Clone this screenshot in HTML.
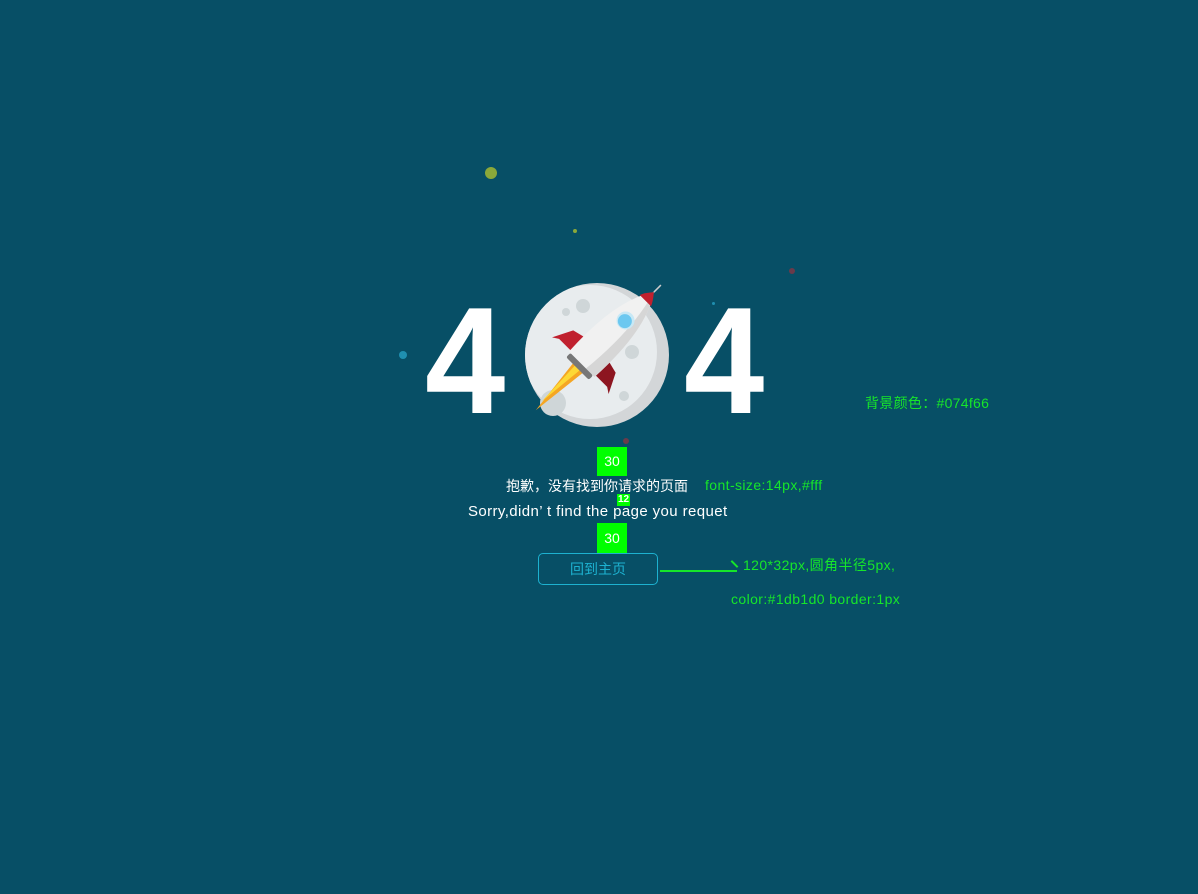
<!DOCTYPE html>
<html><head><meta charset="utf-8"><style>
body{margin:0;width:1198px;height:894px;background:#074f66;position:relative;overflow:hidden;font-family:"Liberation Sans","Noto Sans CJK SC",sans-serif}
.a{position:absolute;white-space:nowrap}
.four{position:absolute;color:#fff;font-weight:bold;font-size:152px;line-height:1;top:285px;transform:scaleX(.95);transform-origin:left top}
.g{position:absolute;background:#00ff00;color:#fff;font-size:14px;text-align:center}
.ann{position:absolute;color:#16e62a;font-size:14px;white-space:nowrap;letter-spacing:.4px}
.dot{position:absolute;border-radius:50%}
</style></head><body>
<div class="dot" style="left:485px;top:167px;width:12px;height:12px;background:#8aa83a"></div>
<div class="dot" style="left:573px;top:229px;width:4px;height:4px;background:#8aa83a"></div>
<div class="dot" style="left:789px;top:268px;width:6px;height:6px;background:#6a3a4a"></div>
<div class="dot" style="left:399px;top:351px;width:8px;height:8px;background:#1f8fb0"></div>
<div class="dot" style="left:712px;top:302px;width:3px;height:3px;background:#1f8fb0"></div>
<div class="dot" style="left:623px;top:438px;width:6px;height:6px;background:#6a3a4a"></div>
<div class="four" style="left:425px">4</div>
<div class="four" style="left:684px">4</div>
<svg class="a" style="left:520px;top:275px" width="160" height="160" viewBox="520 275 160 160">
<defs><clipPath id="m"><circle cx="597" cy="355" r="72"/></clipPath></defs>
<circle cx="597" cy="355" r="72" fill="#d3d6d8"/>
<circle cx="590" cy="352" r="67" fill="#e8ecee" clip-path="url(#m)"/>
<circle cx="583" cy="306" r="7" fill="#cfd6d8"/><circle cx="566" cy="312" r="4" fill="#cfd6d8"/>
<circle cx="632" cy="352" r="7" fill="#cfd6d8"/><circle cx="624" cy="396" r="5" fill="#cfd6d8"/>
<circle cx="553" cy="403" r="13" fill="#cfd6d8"/>
<g transform="translate(610,336) rotate(45)">
<path d="M-7 44 L0 105 L7 44Z" fill="#f5a623"/>
<path d="M-4 44 L-2 95 L3 44Z" fill="#fdd835"/>
<path d="M-14 18 L-30 22 L-40 42 L-34 38 L-14 38Z" fill="#c0202e"/>
<path d="M14 18 L30 22 L40 42 L34 38 L14 38Z" fill="#8d1520"/>
<path d="M0 -62 Q-22 -30 -18 40 L18 40 Q22 -30 0 -62Z" fill="#f1f1f1"/>
<path d="M0 -62 Q22 -30 18 40 L6 40 Q12 -20 0 -62Z" fill="#d6d6d6"/>
<path d="M0 -62 Q-6 -55 -8 -50 L8 -50 Q6 -55 0 -62Z" fill="#c0202e"/>
<line x1="0" y1="-62" x2="0" y2="-72" stroke="#ccc" stroke-width="1.5"/>
<circle cx="0" cy="-22" r="9" fill="#c8e8f5"/><circle cx="0" cy="-21" r="7" fill="#6cc8f0"/>
<rect x="-16" y="40" width="32" height="6" rx="2" fill="#777"/>
</g>
</svg>
<div class="g" style="left:597px;top:447px;width:30px;height:29px;line-height:29px">30</div>
<div class="g" style="left:617px;top:494px;width:13px;height:12px;line-height:12px;font-size:10px;font-weight:bold">12</div>
<div class="g" style="left:597px;top:523px;width:30px;height:30px;line-height:30px">30</div>
<div class="a" style="left:506px;top:477px;color:#fff;font-size:14px;line-height:18px">抱歉，没有找到你请求的页面</div>
<div class="a" style="left:468px;top:503px;color:#fff;font-size:15px;line-height:18px;letter-spacing:.4px">Sorry,didn’ t find the page you requet</div>
<div class="a" style="left:538px;top:553px;width:118px;height:30px;border:1px solid #1db1d0;border-radius:5px;color:#1db1d0;font-size:14px;line-height:30px;text-align:center">回到主页</div>
<div class="a" style="left:660px;top:570px;width:77px;height:2px;background:#16e62a"></div>
<div class="a" style="left:730px;top:563px;width:9px;height:2px;background:#16e62a;transform:rotate(45deg)"></div>
<div class="ann" style="left:705px;top:477px">font-size:14px,#fff</div>
<div class="ann" style="left:743px;top:555px">120*32px,圆角半径5px,</div>
<div class="ann" style="left:731px;top:591px">color:#1db1d0 border:1px</div>
<div class="ann" style="left:865px;top:393px;letter-spacing:.3px">背景颜色：#074f66</div>
</body></html>
